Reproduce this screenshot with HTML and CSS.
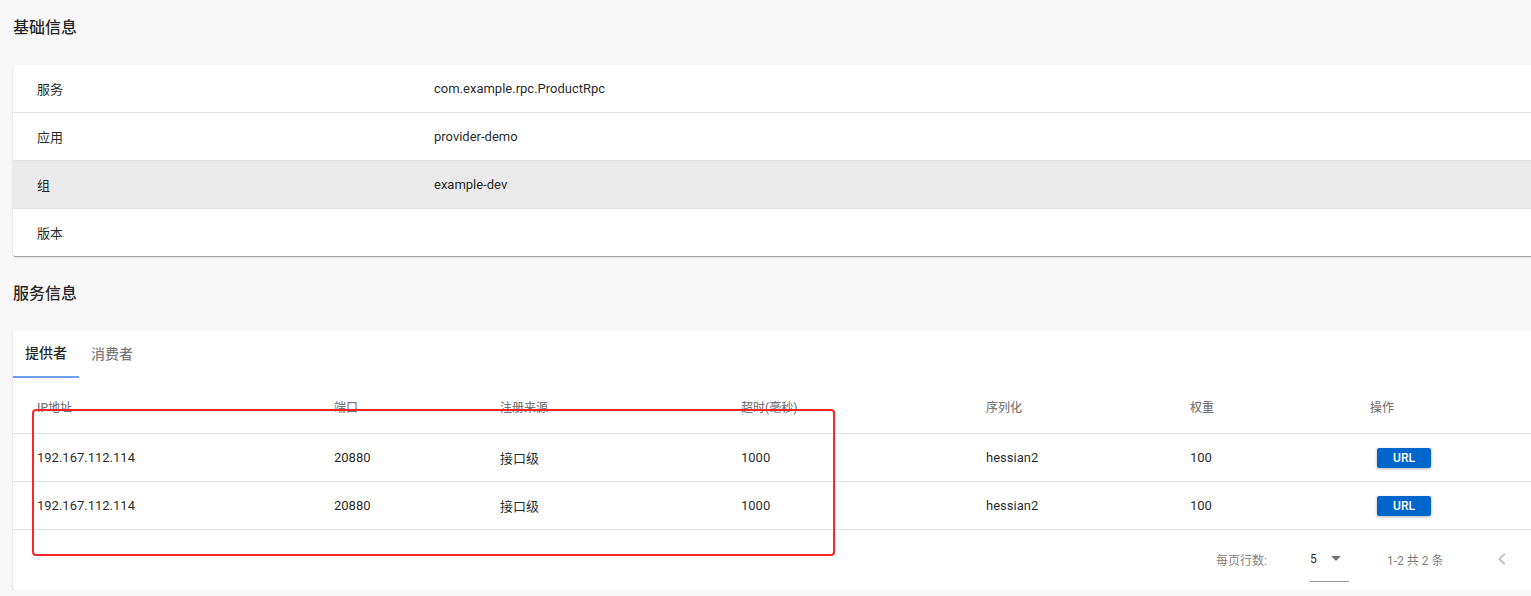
FILE: index.html
```html
<!DOCTYPE html>
<html lang="zh">
<head>
<meta charset="utf-8">
<link rel="stylesheet" href="styles.css">
</head>
<body>
<div class="page">
  <h3 class="section-title">基础信息</h3>
  <div class="card info-card">
    <div class="info-row"><div class="info-label">服务</div><div class="info-value">com.example.rpc.ProductRpc</div></div>
    <div class="info-row"><div class="info-label">应用</div><div class="info-value">provider-demo</div></div>
    <div class="info-row hover"><div class="info-label">组</div><div class="info-value">example-dev</div></div>
    <div class="info-row"><div class="info-label">版本</div><div class="info-value"></div></div>
  </div>

  <h3 class="section-title second">服务信息</h3>
  <div class="card table-card">
    <div class="tabs">
      <div class="tab active">提供者</div>
      <div class="tab">消费者</div>
    </div>
    <div class="table-wrap">
      <div class="trow thead">
        <div class="c c1">IP地址</div><div class="c c2">端口</div><div class="c c3">注册来源</div><div class="c c4">超时(毫秒)</div><div class="c c5">序列化</div><div class="c c6">权重</div><div class="c c7">操作</div>
      </div>
      <div class="trow">
        <div class="c c1">192.167.112.114</div><div class="c c2">20880</div><div class="c c3">接口级</div><div class="c c4">1000</div><div class="c c5">hessian2</div><div class="c c6">100</div><div class="c c7"><span class="btn">URL</span></div>
      </div>
      <div class="trow">
        <div class="c c1">192.167.112.114</div><div class="c c2">20880</div><div class="c c3">接口级</div><div class="c c4">1000</div><div class="c c5">hessian2</div><div class="c c6">100</div><div class="c c7"><span class="btn">URL</span></div>
      </div>
      <div class="footer">
        <span class="rpp">每页行数:</span>
        <span class="select"><span class="sel-val">5</span><span class="caret"></span></span>
        <span class="range">1-2 共 2 条</span>
        <svg class="prev" width="24" height="24" viewBox="0 0 24 24"><path d="M15.41 16.58L10.83 12l4.58-4.59L14 6l-6 6 6 6z" fill="#c4c4c4"/></svg>
      </div>
      <div class="highlight"></div>
    </div>
  </div>
</div>
</body>
</html>
```

FILE: styles.css
```css
html, body {
  margin: 0;
  padding: 0;
  background: #f8f8f8;
  overflow: hidden;
}
body {
  font-family: Roboto, "Noto Sans CJK SC", sans-serif;
  color: rgba(0,0,0,0.87);
  font-size: 13px;
}
.page {
  width: 1600px;
  padding: 0 0 0 13px;
}
.section-title {
  margin: 0;
  height: 56px;
  line-height: 56px;
  font-size: 16px;
  font-weight: 500;
  color: rgba(0,0,0,0.87);
}
.section-title.second {
  margin-top: 10px;
}
.card {
  background: #fff;
  box-shadow: 0 2px 1px -1px rgba(0,0,0,0.2), 0 1px 1px 0 rgba(0,0,0,0.14), 0 1px 3px 0 rgba(0,0,0,0.12);
  border-radius: 2px;
}
.info-card {
  margin-top: 9px;
}
.info-row {
  display: flex;
  height: 48px;
  align-items: center;
  border-top: 1px solid #e0e0e0;
  box-sizing: border-box;
}
.info-row:first-child { border-top: none; height: 47px; }
.info-row.hover { background: #eaeaea; }
.info-label {
  width: 397px;
  padding-left: 24px;
}
.info-value { flex: 1; }

.table-card {
  margin-top: 8px;
  height: 260px;
}
.tabs {
  display: flex;
  height: 48px;
}
.tab {
  padding: 0 12px;
  height: 48px;
  line-height: 48px;
  font-size: 14px;
  font-weight: 500;
  color: rgba(0,0,0,0.54);
  box-sizing: border-box;
}
.tab.active {
  color: rgba(0,0,0,0.87);
  border-bottom: 2px solid #6d9ff0;
  width: 66px;
  line-height: 46px;
}
.table-wrap {
  position: relative;
}
.trow {
  display: flex;
  height: 48px;
  align-items: center;
  border-bottom: 1px solid #e0e0e0;
  box-sizing: border-box;
}
.trow.thead {
  height: 56px;
  align-items: flex-start;
  padding-top: 20px;
  color: rgba(0,0,0,0.54);
  font-size: 12px;
  font-weight: 500;
}
.c { box-sizing: border-box; white-space: nowrap; }
.c1 { width: 321px; padding-left: 24px; }
.c2 { width: 166px; }
.c3 { width: 241px; }
.c4 { width: 245px; }
.c5 { width: 204px; }
.c6 { width: 180px; }
.c7 { width: 100px; }
.btn {
  display: inline-block;
  margin-left: 7px;
  width: 54px;
  height: 20px;
  line-height: 20px;
  text-align: center;
  background: #0066cc;
  color: #fff;
  font-size: 12px;
  font-weight: 500;
  border-radius: 2px;
  box-shadow: 0 1px 3px rgba(0,0,0,0.3);
}
.footer {
  display: flex;
  align-items: center;
  height: 58px;
  padding-left: 1203px;
  font-size: 12px;
  color: rgba(0,0,0,0.54);
}
.rpp { width: 94px; }
.select {
  display: inline-flex;
  align-items: center;
  width: 39px;
  height: 30px;
  border-bottom: 1px solid rgba(0,0,0,0.42);
  margin-top: 16px;
  box-sizing: border-box;
  color: rgba(0,0,0,0.87);
}
.sel-val { width: 21px; margin-top: -16px; }
.caret {
  width: 0; height: 0;
  border-left: 5px solid transparent;
  border-right: 5px solid transparent;
  border-top: 5px solid rgba(0,0,0,0.54);
  margin-top: -16px;
}
.range { margin-left: 38px; width: 101px; }
.prev { margin-left: 2px; }
.highlight {
  position: absolute;
  left: 19px;
  top: 31px;
  width: 803px;
  height: 147px;
  border: 2.5px solid #ff2626;
  border-radius: 4px;
  box-sizing: border-box;
}
```
